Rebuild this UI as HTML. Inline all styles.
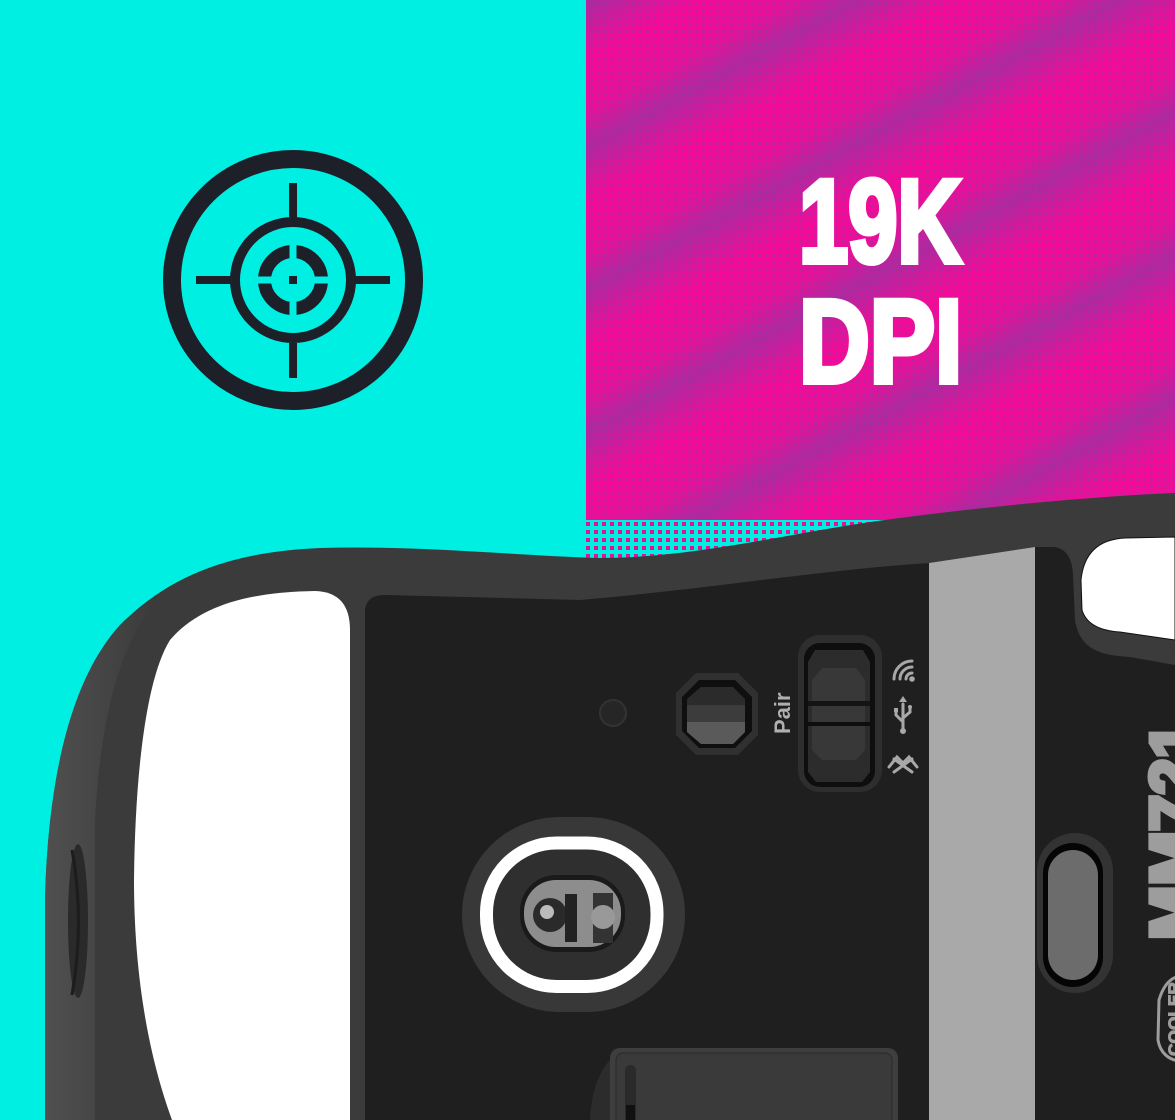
<!DOCTYPE html>
<html><head><meta charset="utf-8"><style>
html,body{margin:0;padding:0;background:#00efe3;}
svg{display:block;}
</style></head><body>
<svg width="1175" height="1120" viewBox="0 0 1175 1120" xmlns="http://www.w3.org/2000/svg">
<defs>
<linearGradient id="band" gradientUnits="userSpaceOnUse" x1="700" y1="0" x2="760" y2="110" spreadMethod="repeat">
<stop offset="0" stop-color="#f50a98"/>
<stop offset="0.35" stop-color="#e6109a"/>
<stop offset="0.6" stop-color="#b0289f"/>
<stop offset="0.8" stop-color="#d4189c"/>
<stop offset="1" stop-color="#f50a98"/>
</linearGradient>
<pattern id="dots" width="7" height="7" patternUnits="userSpaceOnUse">
<circle cx="3.5" cy="3.5" r="1.6" fill="#8a3a9e" opacity="0.45"/>
</pattern>
<pattern id="half" width="8" height="8" patternUnits="userSpaceOnUse">
<rect width="8" height="8" fill="#00efe3"/>
<rect x="2" y="2" width="4" height="4" fill="#e8108f"/>
</pattern>
<linearGradient id="side" x1="0" y1="0" x2="1" y2="0">
<stop offset="0" stop-color="#555"/>
<stop offset="1" stop-color="#3a3a3a"/>
</linearGradient>
</defs>

<rect width="1175" height="1120" fill="#00efe3"/>
<rect x="586" y="0" width="589" height="522" fill="url(#band)"/>
<rect x="586" y="0" width="589" height="522" fill="url(#dots)"/>
<rect x="586" y="520" width="320" height="50" fill="url(#half)"/>

<g fill="none" stroke="#1d1f29">
<circle cx="293" cy="280" r="121" stroke-width="18"/>
<circle cx="293" cy="280" r="58" stroke-width="10"/>
<circle cx="293" cy="280" r="28.5" stroke-width="13"/>
</g>
<g fill="#00efe3">
<rect x="289.5" y="245" width="7" height="70"/>
<rect x="258" y="276.5" width="70" height="7"/>
</g>
<g fill="#1d1f29">
<rect x="289" y="183" width="8" height="36"/>
<rect x="289" y="343" width="8" height="35"/>
<rect x="196" y="276" width="36" height="8"/>
<rect x="355" y="276" width="35" height="8"/>
<rect x="289" y="276" width="8" height="8"/>
</g>

<g fill="#fff" stroke="#fff" stroke-width="6" stroke-linejoin="miter" font-family="Liberation Sans, sans-serif" font-weight="bold" font-size="118">
<text transform="translate(799,262) scale(0.75,1)">19K</text>
<text transform="translate(799,382) scale(0.83,1)">DPI</text>
</g>

<path d="M45 1120 L45 900 C48 780 70 680 120 625 C170 575 230 552 320 548 C420 545 520 556 600 558 C700 558 800 530 900 518 C1000 505 1100 496 1175 493 L1175 1120 Z" fill="#3b3b3b"/>
<path d="M45 1120 L45 900 C48 780 70 680 120 625 C135 612 145 605 160 596 C120 640 100 720 95 820 L95 1120 Z" fill="url(#side)" opacity="0.8"/>
<ellipse cx="78" cy="921" rx="10" ry="77" fill="#2a2a2a"/>
<path d="M72 850 Q85 921 72 995" stroke="#1c1c1c" stroke-width="3" fill="none"/>

<path d="M365 1120 L365 612 Q365 595 385 595 L580 600 C700 590 820 570 929 563 L1035 547 L1055 547 Q1072 550 1073 575 L1075 620 C1080 650 1100 655 1130 657 L1175 665 L1175 1120 Z" fill="#1f1f1f"/>
<polygon points="929,563 1035,547 1035,1120 929,1120" fill="#a9a9aa"/>

<path d="M350 1120 L350 630 Q350 592 315 591 C250 592 200 605 170 640 C145 680 135 780 134 880 C134 980 150 1060 172 1120 Z" fill="#fff"/>
<path d="M1175 537 L1125 538 Q1085 540 1081 580 L1082 610 Q1088 630 1120 632 L1175 640 Z" fill="#fff" stroke="#111" stroke-width="1"/>

<circle cx="613" cy="713" r="13" fill="#262626" stroke="#333" stroke-width="2"/>

<path d="M696 673 L738 673 L758 693 L758 735 L738 755 L696 755 L676 735 L676 693 Z" fill="#303030"/>
<path d="M699 680 L735 680 L752 697 L752 731 L735 748 L699 748 L682 731 L682 697 Z" fill="#0f0f0f"/>
<path d="M701 687 L733 687 L745 699 L745 732 L733 744 L701 744 L687 732 L687 699 Z" fill="#2b2b2b"/>
<rect x="687" y="705" width="58" height="17" fill="#3c3c3c"/>
<path d="M687 722 L745 722 L745 732 L733 744 L701 744 L687 732 Z" fill="#5a5a5a"/>
<text transform="translate(790,734) rotate(-90)" font-family="Liberation Sans, sans-serif" font-weight="bold" font-size="22" fill="#b0b0b0">Pair</text>

<rect x="798" y="635" width="84" height="157" rx="22" fill="#2e2e2e"/>
<rect x="804" y="643" width="71" height="144" rx="16" fill="#0e0e0e"/>
<path d="M815 650 L863 650 L870 662 L870 772 L862 782 L816 782 L808 772 L808 662 Z" fill="#2c2c2c"/>
<path d="M822 668 L856 668 L865 680 L865 750 L856 760 L822 760 L812 750 L812 680 Z" fill="#383838"/>
<rect x="808" y="701" width="62" height="5" fill="#141414"/>
<rect x="808" y="722" width="62" height="4" fill="#0e0e0e"/>

<g stroke="#a8a8a8" stroke-width="3" fill="none" stroke-linecap="round">
<path d="M906 679 A6 6 0 0 1 912 673"/>
<path d="M900 679 A12 12 0 0 1 912 667"/>
<path d="M894 679 A18 18 0 0 1 912 661"/>
<path d="M903 704 L903 729"/>
<path d="M903 722 L896 715 L896 710"/>
<path d="M903 718 L910 712 L910 708"/>
<path d="M889 767 L897 757 L903 763 L909 757 L917 767"/>
<path d="M894 772 L912 759 M894 759 L912 772"/>
</g>
<circle cx="912" cy="679" r="2.8" fill="#a8a8a8"/>
<path d="M899 702 L903 696 L907 702 Z" fill="#a8a8a8"/>
<circle cx="903" cy="731" r="3" fill="#a8a8a8"/>
<rect x="894" y="708" width="4" height="4" fill="#a8a8a8"/>
<circle cx="910" cy="707" r="2" fill="#a8a8a8"/>

<rect x="462" y="817" width="223" height="195" rx="98" fill="#383838"/>
<rect x="486.5" y="843" width="170.5" height="143.5" rx="70" fill="#2f2f2f" stroke="#fff" stroke-width="13"/>
<rect x="520" y="875" width="105" height="77" rx="36" fill="#1a1a1a"/>
<rect x="524" y="880" width="97" height="67" rx="32" fill="#8d8d8d"/>
<circle cx="550" cy="915" r="17" fill="#2a2a2a"/>
<circle cx="547" cy="912" r="7" fill="#bbb"/>
<rect x="565" y="894" width="12" height="48" fill="#222"/>
<rect x="593" y="893" width="20" height="50" fill="#333"/>
<circle cx="603" cy="917" r="12" fill="#999"/>

<path d="M590 1120 Q592 1075 615 1055 L615 1120 Z" fill="#2c2c2c"/>
<rect x="610" y="1048" width="288" height="90" rx="10" fill="#3e3e3e"/>
<rect x="616" y="1053" width="276" height="80" rx="7" fill="#3a3a3a" stroke="#2a2a2a" stroke-width="1"/>
<rect x="625" y="1065" width="11" height="70" rx="5" fill="#2a2a2a"/>
<rect x="626" y="1105" width="9" height="20" fill="#111"/>

<rect x="1037" y="833" width="76" height="160" rx="38" fill="#333"/>
<rect x="1043" y="843" width="60" height="144" rx="30" fill="#050505"/>
<rect x="1048" y="850" width="50" height="130" rx="25" fill="#6c6c6c"/>

<text transform="translate(1195,940) rotate(-90)" font-family="Liberation Sans, sans-serif" font-weight="bold" font-size="64" fill="#9d9d9d" stroke="#9d9d9d" stroke-width="5" textLength="218" lengthAdjust="spacingAndGlyphs">MM721</text>

<path d="M1180 976 C1168 978 1162 990 1159 1000 L1158 1040 C1160 1052 1168 1060 1180 1061" fill="none" stroke="#9d9d9d" stroke-width="3"/>
<text transform="translate(1180,1056) rotate(-90)" font-family="Liberation Sans, sans-serif" font-weight="bold" font-size="17" fill="#9d9d9d" stroke="#9d9d9d" stroke-width="1" textLength="74" lengthAdjust="spacingAndGlyphs">COOLER</text>
</svg>
</body></html>
